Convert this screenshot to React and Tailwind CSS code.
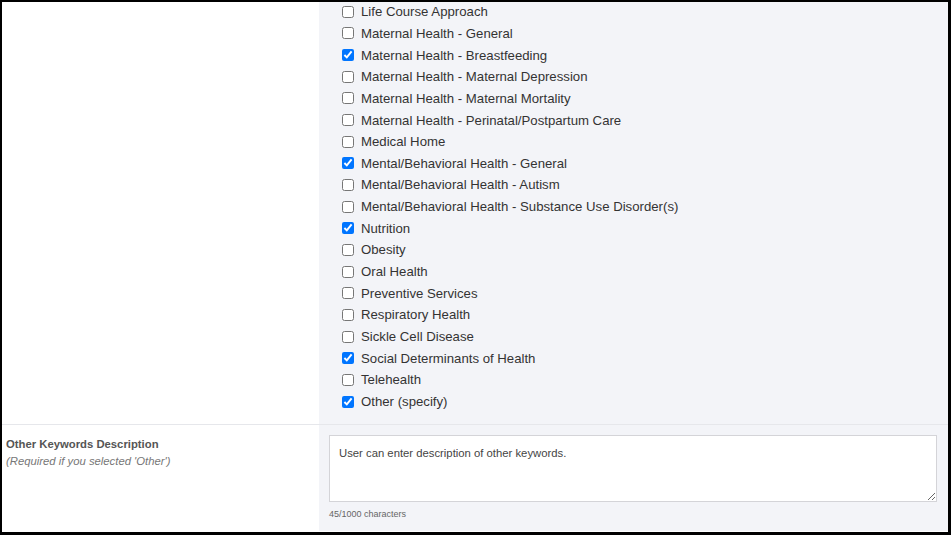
const keywords = [
  ['Life Course Approach', false],
  ['Maternal Health - General', false],
  ['Maternal Health - Breastfeeding', true],
  ['Maternal Health - Maternal Depression', false],
  ['Maternal Health - Maternal Mortality', false],
  ['Maternal Health - Perinatal/Postpartum Care', false],
  ['Medical Home', false],
  ['Mental/Behavioral Health - General', true],
  ['Mental/Behavioral Health - Autism', false],
  ['Mental/Behavioral Health - Substance Use Disorder(s)', false],
  ['Nutrition', true],
  ['Obesity', false],
  ['Oral Health', false],
  ['Preventive Services', false],
  ['Respiratory Health', false],
  ['Sickle Cell Disease', false],
  ['Social Determinants of Health', true],
  ['Telehealth', false],
  ['Other (specify)', true],
];

const desc = 'User can enter description of other keywords.';

export default function App() {
  return (
    <div
      className="w-[951px] h-[535px] overflow-hidden border-black border-t-2 border-l-2 border-r-[3px] border-b-[3px] bg-white text-[#333]"
      style={{ fontFamily: '"Liberation Sans", Arial, sans-serif' }}
    >
      <div className="flex h-[423px] border-b border-[#e6e7eb]">
        <div className="w-[317px] shrink-0 bg-white" />
        <div className="flex-1 bg-[#f3f4f8] pl-[23px]">
          <ul className="-mt-[1px]">
            {keywords.map(([label, checked]) => (
              <li key={label} className="flex h-[21.67px] items-center">
                <input
                  type="checkbox"
                  defaultChecked={checked}
                  className="m-0 h-[12px] w-[12px] shrink-0"
                />
                <span className="ml-[7px] text-[13.2px] leading-none text-[#333]">{label}</span>
              </li>
            ))}
          </ul>
        </div>
      </div>
      <div className="flex h-[106px]">
        <div className="w-[317px] shrink-0 pl-[4px] pt-[11px]">
          <p className="text-[11.3px] font-bold leading-[17px] text-[#555]">Other Keywords Description</p>
          <p className="text-[11.3px] italic leading-[16px] text-[#777]">(Required if you selected 'Other')</p>
        </div>
        <div className="flex-1 bg-[#f3f4f8] pl-[10px] pr-[11px] pt-[10px]">
          <textarea
            defaultValue={desc}
            className="block h-[67px] w-full resize-y border border-[#d4d4d8] bg-white px-[9px] py-[9px] text-[11.3px] leading-[17px] text-[#444] outline-none"
            style={{ fontFamily: '"Liberation Sans", Arial, sans-serif' }}
          />
          <p className="mt-[6px] text-[9px] leading-[12px] text-[#666]">{desc.length}/1000 characters</p>
        </div>
      </div>
    </div>
  );
}
